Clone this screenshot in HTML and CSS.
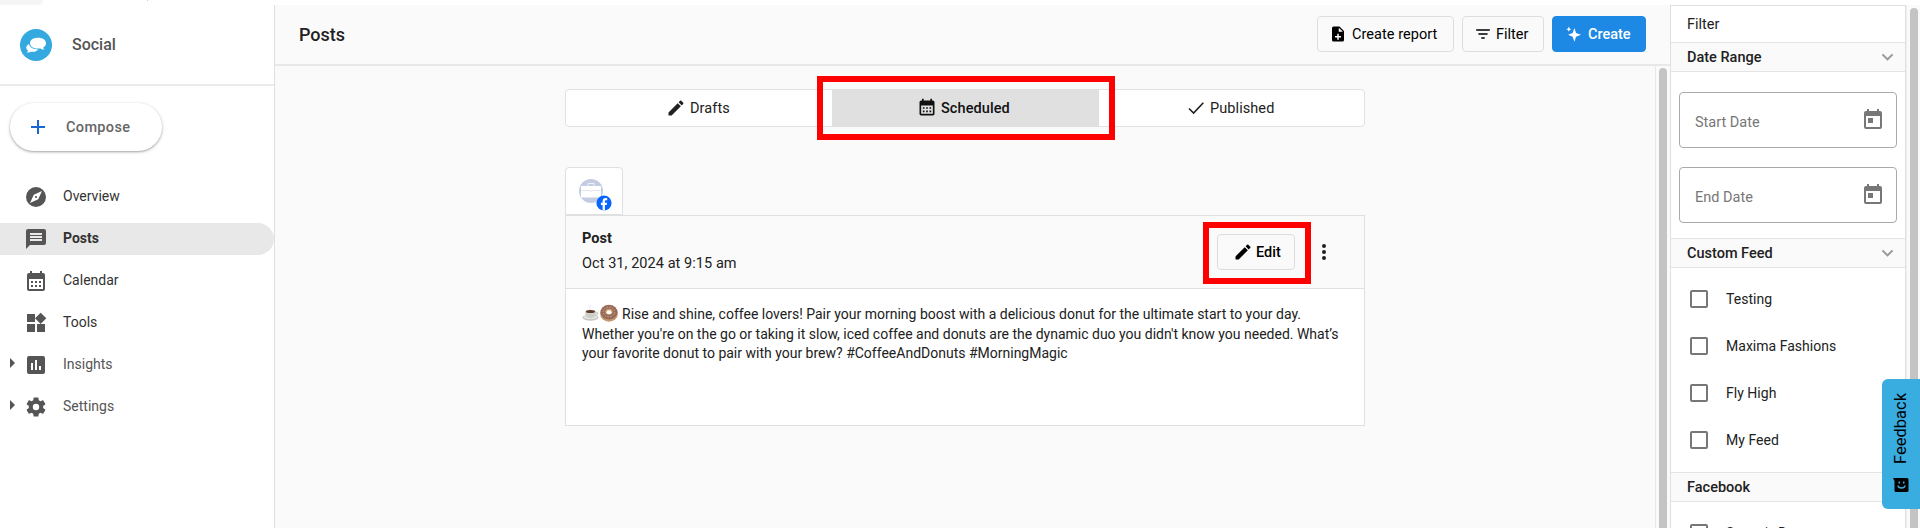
FILE: index.html
```html
<!DOCTYPE html>
<html lang="en">
<head>
<meta charset="utf-8">
<title>Social – Posts</title>
<link rel="stylesheet" href="styles.css">
</head>
<body>
<svg class="defs" aria-hidden="true">
  <symbol id="pencil" viewBox="0 0 24 24"><path d="M3 17.25V21h3.75L17.81 9.94l-3.75-3.75L3 17.25zM20.71 7.04a1 1 0 0 0 0-1.41l-2.34-2.34a1 1 0 0 0-1.41 0l-1.83 1.83 3.75 3.75 1.83-1.83z"/></symbol>
  <symbol id="calendar" viewBox="0 0 24 24"><path fill-rule="evenodd" d="M6 1h2v2h8V1h2v2h1a2 2 0 0 1 2 2v14a2 2 0 0 1-2 2H5a2 2 0 0 1-2-2V5a2 2 0 0 1 2-2h1V1zM5 9v10h14V9H5zm2 2h2v2H7v-2zm4 0h2v2h-2v-2zm4 0h2v2h-2v-2zm-8 4h2v2H7v-2zm4 0h2v2h-2v-2zm4 0h2v2h-2v-2z"/></symbol>
  <symbol id="today" viewBox="0 0 24 24"><path d="M19 3h-1V1h-2v2H8V1H6v2H5a2 2 0 0 0-2 2v14a2 2 0 0 0 2 2h14a2 2 0 0 0 2-2V5a2 2 0 0 0-2-2zm0 16H5V8h14v11zM7 10h5v5H7z"/></symbol>
  <symbol id="chevron" viewBox="0 0 24 24"><path d="M7.41 8.59 12 13.17l4.59-4.58L18 10l-6 6-6-6z"/></symbol>
</svg>
<div class="app">
  <div class="topstrip"><span class="blob"></span><span class="speck"></span></div>

  <aside class="sidebar">
    <div class="brand">
      <svg class="logo" viewBox="0 0 32 32"><circle cx="16" cy="16" r="16" fill="#33a9e0"/><path fill="#fff" d="M18 8.8c4.700 0 8 2.200 8 5.400 0 2-1.100 3.500-2.800 4.400.1.800.5 1.400 1.100 1.900-1.700 0-2.900-.4-3.800-1.100-.8.200-1.600.2-2.500.2-4.700 0-8-2.200-8-5.400s3.300-5.400 8-5.400z"/><path fill="#fff" d="M9 14.900c.5 3.200 4.200 5.400 9.200 5.500-1.400 1.900-4 2.700-6.900 2.300-1.200.7-2.800 1-4.600.7.800-.5 1.200-1.100 1.300-1.900-2.500-2-2.200-5.100 1-6.600z"/></svg>
      <span class="brand-name">Social</span>
    </div>
    <button class="compose">
      <svg class="plus" viewBox="0 0 14 14"><path d="M6 0h2v6h6v2H8v6H6V8H0V6h6z"/></svg>
      <span class="compose-text">Compose</span>
    </button>
    <nav class="nav">
      <a class="item"><i></i><svg viewBox="0 0 24 24"><path d="M12 10.900a1.100 1.100 0 1 0 0 2.200 1.100 1.100 0 0 0 0-2.200zM12 2a10 10 0 1 0 0 20 10 10 0 0 0 0-20zm2.190 12.190L6 18l3.810-8.190L18 6l-3.810 8.190z"/></svg><span>Overview</span></a>
      <a class="item active"><i></i><svg viewBox="0 0 24 24"><path d="M20 2H4a2 2 0 0 0-2 2v18l4-4h14a2 2 0 0 0 2-2V4a2 2 0 0 0-2-2zm-2 12H6v-2h12v2zm0-3H6V9h12v2zm0-3H6V6h12v2z"/></svg><span>Posts</span></a>
      <a class="item"><i></i><svg><use href="#calendar" y="1"/></svg><span>Calendar</span></a>
      <a class="item"><i></i><svg viewBox="0 0 24 24"><path d="M13 13v8h8v-8h-8zM3 21h8v-8H3v8zM3 3v8h8V3H3zm13.660-1.310L11 7.340 16.660 13l5.660-5.660-5.660-5.650z"/></svg><span>Tools</span></a>
      <a class="item dim"><i class="arrow"></i><svg viewBox="0 0 24 24"><path d="M19 3H5a2 2 0 0 0-2 2v14a2 2 0 0 0 2 2h14a2 2 0 0 0 2-2V5a2 2 0 0 0-2-2zM9 17H7v-7h2v7zm4 0h-2V7h2v10zm4 0h-2v-4h2v4z"/></svg><span>Insights</span></a>
      <a class="item dim"><i class="arrow"></i><svg viewBox="0 0 24 24"><path d="M19.140 12.940c.04-.3.060-.61.060-.94 0-.32-.02-.64-.07-.94l2.030-1.580a.49.490 0 0 0 .12-.61l-1.920-3.320a.488.488 0 0 0-.59-.22l-2.390.96c-.5-.38-1.030-.7-1.620-.94l-.36-2.540a.484.484 0 0 0-.48-.41h-3.840c-.24 0-.43.170-.47.410l-.36 2.540c-.59.240-1.130.570-1.620.940l-2.390-.96c-.22-.08-.47 0-.59.220L2.740 8.870c-.12.210-.08.470.120.610l2.030 1.580c-.05.300-.09.630-.09.940s.02.640.070.940l-2.030 1.580a.49.490 0 0 0-.12.610l1.920 3.320c.12.220.370.290.590.220l2.390-.96c.5.380 1.030.700 1.620.940l.36 2.540c.05.240.240.410.480.410h3.840c.24 0 .44-.17.470-.41l.36-2.540c.59-.24 1.130-.56 1.620-.94l2.390.96c.22.080.470 0 .59-.22l1.920-3.320a.47.470 0 0 0-.12-.61l-2.010-1.580zM12 15.200a3.200 3.200 0 1 1 0-6.400 3.200 3.200 0 0 1 0 6.400z"/></svg><span>Settings</span></a>
    </nav>
  </aside>

  <main class="main">
    <header class="bar">
      <h1 class="title">Posts</h1>
      <button class="btn b-report"><svg viewBox="0 0 24 24"><path fill-rule="evenodd" d="M14 2H6a2 2 0 0 0-2 2v16a2 2 0 0 0 2 2h12a2 2 0 0 0 2-2V8l-6-6zm-1 1.500L18.500 9H13V3.500zM11 11.500h2V14.500h3v2h-3v3h-2v-3H8v-2h3z"/></svg><span>Create report</span></button>
      <button class="btn b-filter"><svg viewBox="0 0 16 16"><path d="M1.200 3.200h13.600v1.500H1.200zM3.400 7.200h9.200v1.500H3.400zM6.300 11.300h3.400v1.500H6.300z"/></svg><span>Filter</span></button>
      <button class="btn b-create"><svg viewBox="0 0 16 16"><path d="M9 1.500l1.700 5.300L16 8.900l-5.300 2-1.700 5.300-1.900-5.300-4.900-2 4.900-2.100zM3 0l.8 2 2 .8-2 .8L3 5.600l-.8-2-2-.8 2-.8z"/></svg><span>Create</span></button>
    </header>
    <div class="scroll">
      <div class="content">
        <div class="tabs">
          <div class="tab drafts"><svg viewBox="0 0 24 24"><use href="#pencil"/></svg><span>Drafts</span></div>
          <div class="tab selected"><svg viewBox="0 0 24 24"><use href="#calendar"/></svg><span>Scheduled</span></div>
          <div class="tab published"><svg viewBox="0 0 20 20"><path d="M3 10.500l4.600 4.600L17.300 4.800" fill="none" stroke="currentColor" stroke-width="1.600"/></svg><span>Published</span></div>
          <div class="mark mark-tab"></div>
        </div>
        <div class="account">
          <svg class="avatar" viewBox="0 0 24 24"><circle cx="12" cy="12" r="12" fill="#c3cce2"/><path fill="none" stroke="#eef1f8" d="M9 7V4.500h6V7"/><path fill="#fff" d="M2 7h20v11.500H2z"/><path fill="none" stroke="#dfe4f0" d="M2 11.500h8.500l1.500 1 1.500-1H22"/></svg>
          <svg class="fb" viewBox="0 0 16 16"><circle cx="8" cy="8" r="7.600" fill="#0866ff"/><path fill="#fff" d="M6.600 15.600V10H4.900V7.700h1.700V6.500c0-2.300 1.100-3.400 3.300-3.400l1.300.1v2h-.9c-1 0-1.400.4-1.400 1.400v1.100h2.200L10.700 10H8.900v5.600z"/></svg>
        </div>
        <section class="card">
          <div class="card-head">
            <div class="meta"><div class="kind">Post</div><div class="date">Oct 31, 2024 at 9:15 am</div></div>
            <div class="edit-wrap"><button class="btn b-edit"><svg viewBox="0 0 24 24"><use href="#pencil"/></svg><span>Edit</span></button><div class="mark mark-edit"></div></div>
            <div class="dots"><b></b><b></b><b></b></div>
          </div>
          <div class="card-body">
            <div class="line"><svg class="emoji" viewBox="0 0 18 18"><ellipse cx="8.500" cy="13.500" rx="8" ry="3.200" fill="#c9c7c3"/><ellipse cx="8.500" cy="12.800" rx="7" ry="2.300" fill="#e4e2de"/><path d="M13 8.500c3-1.200 4 2 0 3.200" fill="none" stroke="#c9c7c3" stroke-width="1.200"/><path d="M3 7.500c0 4 2 6.500 5.500 6.500S14 11.500 14 7.500z" fill="#cfcdc9"/><ellipse cx="8.500" cy="7.500" rx="5.500" ry="2.100" fill="#dddad6"/><ellipse cx="8.500" cy="7.600" rx="4.500" ry="1.500" fill="#5a3b2a"/><path d="M8 4.500c-1-1.200 1-2 0-3.500" fill="none" stroke="#e2e2e2"/></svg><svg class="emoji" viewBox="0 0 18 18"><ellipse cx="9" cy="9.300" rx="9" ry="8.500" fill="#c39a70"/><ellipse cx="9" cy="8.300" rx="8.300" ry="7.300" fill="#96695a"/><ellipse cx="9" cy="8" rx="5.700" ry="4.800" fill="none" stroke="#c9a99c" stroke-width="1" stroke-dasharray="1.500 1.200"/><ellipse cx="9" cy="7.800" rx="3.700" ry="3" fill="#d5a06a"/><ellipse cx="9" cy="8.200" rx="2.500" ry="2" fill="#fff"/></svg><span class="after-emoji">Rise and shine, coffee lovers! Pair your morning boost with a delicious donut for the ultimate start to your day.</span></div>
            <div class="line middle"><span>Whether you're on the go or taking it slow, iced coffee and donuts are the dynamic duo you didn't know you needed. What’s</span></div>
            <div class="line"><span>your favorite donut to pair with your brew? #CoffeeAndDonuts #MorningMagic</span></div>
          </div>
        </section>
      </div>
      <div class="track"><div class="thumb"></div></div>
    </div>
  </main>

  <aside class="filters">
    <div class="f-title"><span>Filter</span></div>
    <div class="f-head"><span>Date Range</span><svg><use href="#chevron"/></svg></div>
    <div class="dates">
      <div class="field"><span>Start Date</span><svg><use href="#today"/></svg></div>
      <div class="field"><span>End Date</span><svg><use href="#today"/></svg></div>
    </div>
    <div class="f-head"><span>Custom Feed</span><svg><use href="#chevron"/></svg></div>
    <div class="feeds">
      <label><i></i><span>Testing</span></label>
      <label><i></i><span>Maxima Fashions</span></label>
      <label><i></i><span>Fly High</span></label>
      <label><i></i><span>My Feed</span></label>
    </div>
    <div class="f-head"><span>Facebook</span></div>
    <div class="feeds"><label><i></i><span>Scoop's Donuts</span></label></div>
  </aside>
  <div class="page-track"><div class="thumb"></div></div>
  <div class="feedback"><svg viewBox="0 0 16 16"><g transform="rotate(0 8 8)"><path d="M0 1h14a1.500 1.500 0 0 1 1.500 1.500v11A1.500 1.500 0 0 1 14 15H3a1.500 1.500 0 0 1-1.500-1.500V4z"/><path d="M4.800 8.500c.8 3.300 6.600 3.300 7.400 0" fill="none" stroke="#39ace0" stroke-width="1.300"/><path fill="#39ace0" d="M5.500 4.500h1.500v2H5.500zM10 4.500h1.500v2H10z"/></g></svg><span class="feedback-text">Feedback</span></div>
</div>
</body>
</html>
```
FILE: styles.css
```css
* { box-sizing: border-box; }
body { margin: 0; font: 14.5px/20px Roboto, sans-serif; color: #212121; background: #fff; }
svg { display: block; flex: none; fill: currentColor; width: 24px; height: 24px; }
span { white-space: nowrap; }
button { font: inherit; color: #000; padding: 0; margin: 0; }
.defs { position: absolute; width: 0; height: 0; }
.app { width: 1920px; height: 528px; overflow: hidden; display: grid; grid-template: 5px 523px / 275px 1395px 236px 14px; position: relative; }
.topstrip { grid-column: 1 / -1; display: flex; gap: 104px; }
.blob { width: 43px; height: 5px; background: #f5f5f5; border-radius: 0 0 14px 0; }
.speck { width: 1px; height: 1px; background: #ccc; }

.sidebar { border-right: 1px solid #e0e0e0; background: #fff; }
.brand { height: 81px; border-bottom: 2px solid #ebebeb; padding: 24px 0 0 20px; display: flex; gap: 20px; }
.logo { width: 32px; height: 32px; }
.brand-name { font-size: 16px; font-weight: 500; color: #555; line-height: 31px; }
.compose { display: flex; align-items: center; width: 152px; height: 48px; margin: 17px 0 0 10px; padding-left: 21px; gap: 21px; border: 0; border-radius: 24px; background: #fff; box-shadow: 0 1px 2px rgba(60,64,67,.35), 0 1px 3px 1px rgba(60,64,67,.12); }
.plus { width: 14px; height: 14px; color: #1967d2; }
.compose-text { font-weight: 500; color: #666; letter-spacing: .35px; padding-top: 2px; }
.nav { margin-top: 30px; display: flex; flex-direction: column; gap: 10px; font-size: 14px; }
.item { display: flex; align-items: center; height: 32px; padding-left: 10px; border-radius: 0 16px 16px 0; color: #333; }
.item span { padding-bottom: 2px; }
.item svg { color: #555; margin-right: 15px; }
.item i { width: 14px; flex: none; }
.item .arrow::before { content: ""; display: block; border: 5px solid transparent; border-left-color: #555; border-right: 0; margin-top: -5px; }
.item.active { background: #e8e8e8; font-weight: 700; }
.dim { color: #555; }

.main { background: #fafafa; display: flex; flex-direction: column; min-height: 0; }
.bar { height: 61px; flex: none; border-bottom: 2px solid #e8e8e8; padding: 11px 24px 0 24px; display: flex; gap: 8px; }
.title { margin: 0 auto 0 0; font-size: 18px; font-weight: 500; line-height: 38px; height: 36px; }
.btn { height: 36px; border: 1px solid #dedede; border-radius: 4px; background: #fafafa; display: flex; align-items: center; font-weight: 500; }
.btn svg { width: 16px; height: 16px; }
.btn span { padding-top: 2px; }
.b-report { width: 137px; padding-left: 11px; gap: 5px; font-weight: 400; letter-spacing: .05px; }
.b-report svg { width: 18px; height: 18px; }
.b-filter { width: 82px; padding-left: 12px; gap: 5px; font-weight: 400; }
.b-create { width: 94px; padding-left: 13px; gap: 7px; background: #1e88e5; border-color: #1e88e5; color: #fff; }
.b-create svg { width: 15px; height: 16px; }
.scroll { flex: 1; min-height: 0; display: flex; overflow: hidden; }
.content { flex: 1; padding: 23px 0 0 290px; }
.tabs { width: 800px; height: 38px; display: grid; grid-template-columns: 266px 267px 265px; border: 1px solid #e2e2e2; border-radius: 4px; background: #fff; position: relative; }
.tab { display: flex; align-items: center; gap: 4px; }
.tab span { padding-top: 2px; letter-spacing: .08px; }
.tab svg { width: 20px; height: 20px; }
.drafts { padding-left: 100px; }
.selected { margin: -1px 0; background: #e0e0e0; color: #111; font-weight: 500; padding-left: 85px; }
.published { padding-left: 87px; }
.mark { position: absolute; border: 6px solid #f00; }
.mark-tab { left: 251px; top: -14px; width: 298px; height: 64px; }
.account { width: 58px; height: 48px; margin-top: 40px; border: 1px solid #e0e0e0; border-radius: 4px 4px 0 0; background: #fff; padding: 11px 13px; position: relative; }
.fb { position: absolute; left: 30px; top: 27px; width: 16px; height: 16px; }
.card { width: 800px; height: 211px; border: 1px solid #e0e0e0; background: #fff; }
.card-head { height: 73px; background: #fafafa; border-bottom: 1px solid #e0e0e0; display: flex; padding-left: 16px; }
.meta { width: 635px; padding-top: 13px; display: flex; flex-direction: column; gap: 5px; }
.kind { font-weight: 700; }
.date { letter-spacing: .06px; }
.edit-wrap { position: relative; height: 36px; margin-top: 18px; }
.b-edit { width: 78px; padding-left: 15px; gap: 3px; }
.btn.b-edit svg { width: 20px; height: 20px; }
.mark-edit { left: -14px; top: -12px; width: 108px; height: 62px; }
.dots { display: flex; flex-direction: column; gap: 2px; padding: 28px 0 0 27px; }
.dots b { width: 4px; height: 4px; border-radius: 50%; background: #212121; }
.card-body { padding: 15px 0 0 16px; font-size: 14px; }
.line { display: flex; height: 20px; line-height: 20px; }
.line.middle { height: 19px; }
.emoji { width: 18px; height: 18px; }
.after-emoji { margin-left: 4px; }
.track { width: 15px; border-left: 1px solid #e8e8e8; padding: 2px 3px 0; display: flex; }
.thumb { width: 8px; height: 600px; flex: none; border-radius: 4px; background: #c4c4c4; }

.filters { border: 1px solid #e0e0e0; border-bottom: 0; background: #fff; overflow: hidden; }
.f-title { height: 36px; padding: 9px 16px 0; }
.f-head { height: 30px; border: 1px solid #e4e4e4; border-width: 1px 0; background: #fafafa; padding: 0 6px 0 16px; display: flex; align-items: center; justify-content: space-between; font-weight: 500; }
.f-head span { padding-top: 1px; }
.f-head svg { color: #999; width: 23px; }
.dates { padding: 20px 8px 15px; display: flex; flex-direction: column; gap: 19px; }
.field { height: 56px; border: 1px solid #aaa; border-radius: 4px; padding: 4px 11px 0 15px; display: flex; justify-content: space-between; align-items: center; color: #777; }
.field span { padding-top: 2px; }
.field svg { margin-top: -4px; color: #777; }
.feeds { padding: 22px 0 23px 19px; display: flex; flex-direction: column; gap: 29px; font-size: 14px; }
.feeds label { display: flex; align-items: center; gap: 18px; height: 18px; letter-spacing: .02px; }
.feeds i { width: 18px; height: 18px; border: 2px solid #777; border-radius: 2px; }

.page-track { background: #fafafa; padding: 3px 0 0 3px; border-left: 1px solid #eee; }
.feedback { position: absolute; left: 1882px; top: 379px; width: 38px; height: 130px; border-radius: 6px 0 0 6px; background: #39ace0; color: #000; display: flex; flex-direction: column-reverse; align-items: center; justify-content: flex-start; gap: 13px; padding-bottom: 16px; }
.feedback svg { width: 16px; height: 16px; }
.feedback-text { writing-mode: vertical-rl; transform: rotate(180deg); font-size: 16.500px; }
```
